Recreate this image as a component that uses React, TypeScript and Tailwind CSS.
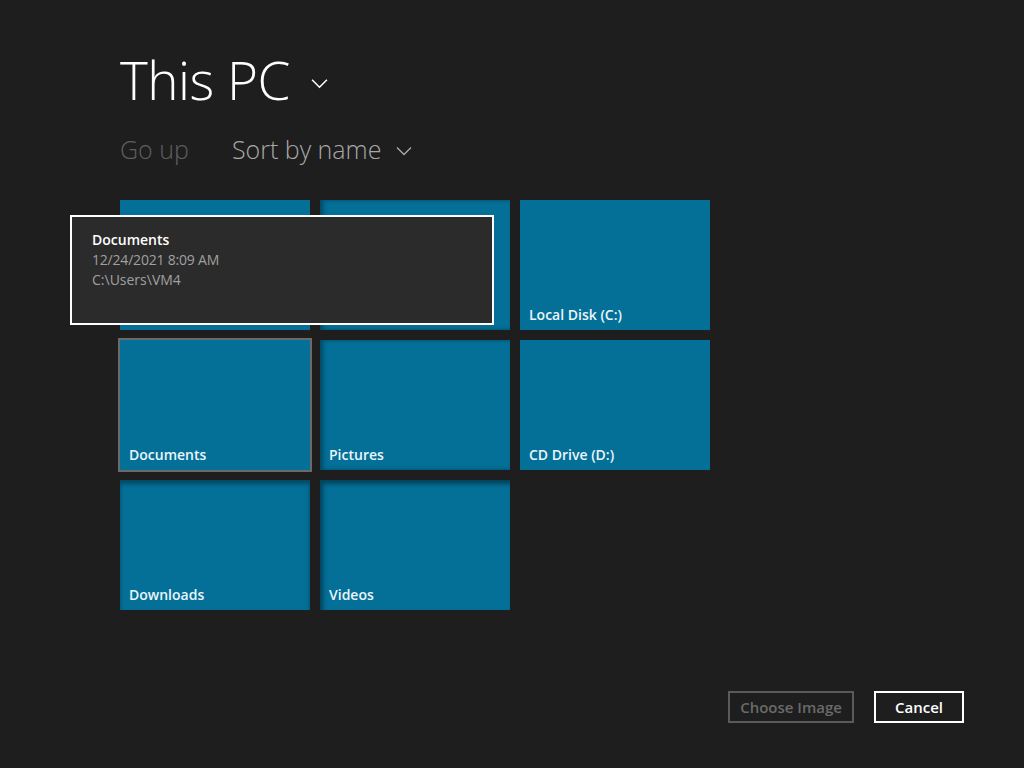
import React from "react";

const font = { fontFamily: '"Segoe UI", "Open Sans", "Noto Sans", sans-serif' };

function Chevron({ className }: { className?: string }) {
  return (
    <svg className={className} viewBox="0 0 16 10" fill="none" stroke="currentColor" strokeWidth="1.4">
      <path d="M1 1.5 L8 8.5 L15 1.5" />
    </svg>
  );
}

function Tile({ label, selected, shadow }: { label?: string; selected?: boolean; shadow?: string }) {
  return (
    <div
      className={
        "relative w-[190px] h-[130px] bg-[#046f97] flex items-end px-[9px] pb-[5px] " +
        (selected ? "outline-2 outline-[#6a6a6a] " : "") +
        (shadow ?? "")
      }
    >
      {label && <span className="text-[14px] font-semibold text-[#eaf6fb] leading-[20px]">{label}</span>}
    </div>
  );
}

export default function App() {
  return (
    <div className="w-[1024px] h-[768px] bg-[#1e1e1e] relative overflow-hidden" style={font}>
      <div className="pl-[120px] pt-[45px]">
        <div className="flex items-center">
          <h1 className="text-[53px] font-light text-white leading-[70px] tracking-[-0.5px]">This PC</h1>
          <Chevron className="w-[17px] h-[11px] text-white ml-[21px] mt-[6px]" />
        </div>
        <div className="flex items-center mt-[16px] text-[25px] font-light leading-[36px]">
          <span className="text-[#5e5e5e]">Go up</span>
          <span className="text-[#a8a8a8] ml-[43px]">Sort by name</span>
          <Chevron className="w-[16px] h-[10px] text-[#a8a8a8] ml-[15px] mt-[4px]" />
        </div>
        <div className="grid grid-cols-[190px_190px_190px] auto-rows-[130px] gap-[10px] mt-[33px]">
          <Tile />
          <Tile shadow="shadow-[inset_3px_0_4px_rgba(0,0,0,0.35)]" />
          <Tile label="Local Disk (C:)" />
          <Tile label="Documents" selected />
          <Tile label="Pictures" shadow="shadow-[inset_3px_0_4px_rgba(0,0,0,0.35)]" />
          <Tile label="CD Drive (D:)" />
          <Tile label="Downloads" shadow="shadow-[inset_0_4px_4px_rgba(0,0,0,0.35)]" />
          <Tile label="Videos" shadow="shadow-[inset_3px_4px_4px_rgba(0,0,0,0.4)]" />
        </div>
      </div>

      <div className="absolute left-[70px] top-[215px] w-[424px] h-[110px] bg-[#2b2b2b] border-2 border-white px-[20px] pt-[13px]">
        <div className="text-[14px] font-semibold text-white leading-[20px]">Documents</div>
        <div className="text-[14px] text-[#a0a0a0] leading-[20px] tracking-[-0.2px]">12/24/2021 8:09 AM</div>
        <div className="text-[14px] text-[#a0a0a0] leading-[20px]">C:\Users\VM4</div>
      </div>

      <div className="absolute right-[60px] bottom-[45px] flex gap-[20px]">
        <button className="w-[126px] h-[32px] border-2 border-[#5a5a5a] text-[#6a6a6a] text-[15px] font-semibold flex items-center justify-center">
          Choose Image
        </button>
        <button className="w-[90px] h-[32px] border-2 border-white text-white text-[15px] font-semibold flex items-center justify-center">
          Cancel
        </button>
      </div>
    </div>
  );
}
